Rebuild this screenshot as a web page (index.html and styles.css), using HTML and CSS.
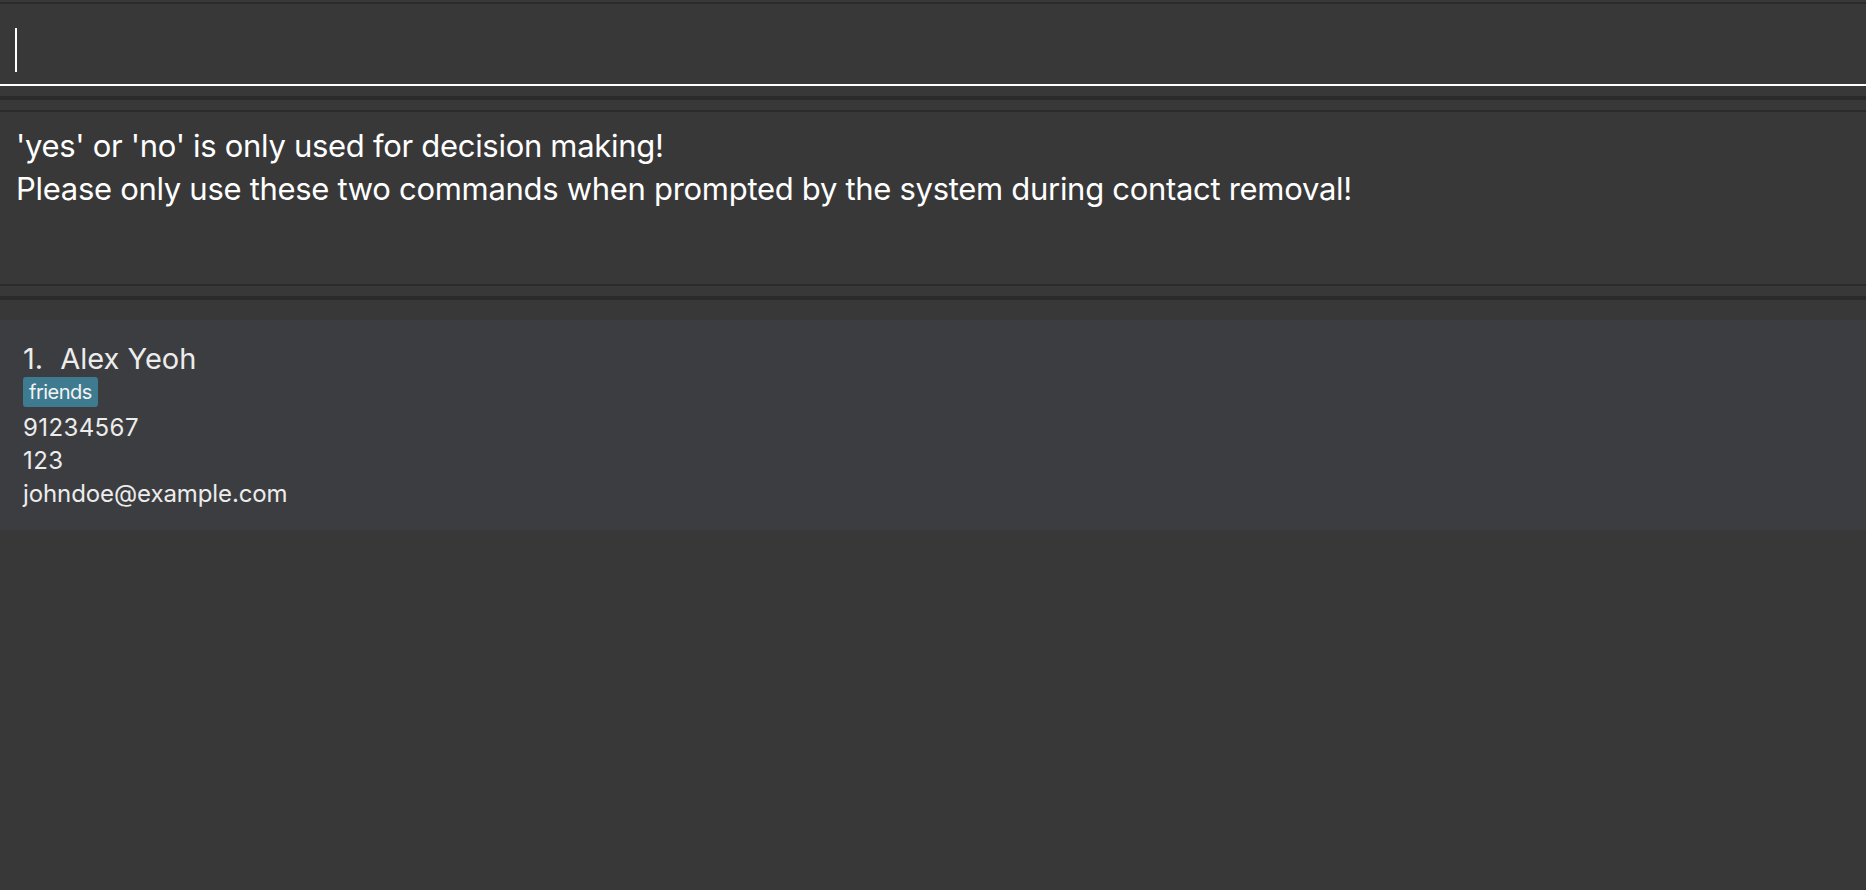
FILE: index.html
```html
<!DOCTYPE html>
<html>
<head>
<meta charset="utf-8">
<link rel="stylesheet" href="styles.css">
</head>
<body>
<div class="app">
  <div class="command-pane">
    <div class="command-box"><span class="caret"></span></div>
  </div>
  <div class="splitter"></div>
  <div class="result-pane">
    <div class="result-box">
      <div class="result-line">'yes' or 'no' is only used for decision making!</div>
      <div class="result-line">Please only use these two commands when prompted by the system during contact removal!</div>
    </div>
  </div>
  <div class="splitter"></div>
  <div class="list-pane">
    <div class="card">
      <div class="card-name"><span class="card-index">1.</span>Alex Yeoh</div>
      <div class="tags"><span class="tag">friends</span></div>
      <div class="detail detail-num">91234567</div>
      <div class="detail detail-num">123</div>
      <div class="detail">johndoe@example.com</div>
    </div>
  </div>
</div>
</body>
</html>
```

FILE: styles.css
```css
html, body {
  margin: 0;
  padding: 0;
  background: #383838;
  height: 100%;
  overflow: hidden;
}

.app {
  font-family: "Inter", "Noto Sans", sans-serif;
  color: #ffffff;
  display: flex;
  flex-direction: column;
}

.command-pane {
  padding: 2px 0 10px;
}

.command-box {
  height: 80px;
  border-top: 2px solid #2b2b2b;
  border-bottom: 2px solid #ffffff;
  box-sizing: content-box;
  padding-left: 15px;
  display: flex;
  align-items: flex-start;
}

.caret {
  display: block;
  width: 2px;
  height: 44px;
  margin-top: 24px;
  background: #ffffff;
}

.splitter {
  height: 4px;
  background: #2b2b2b;
}

.result-pane {
  padding: 10px 0;
}

.result-box {
  border-top: 2px solid #2b2b2b;
  border-bottom: 2px solid #2b2b2b;
  padding: 12px 16px 0;
  box-sizing: content-box;
  height: 160px;
  font-size: 31px;
  line-height: 43px;
  letter-spacing: -0.3px;
  color: #ffffff;
}

.list-pane {
  padding-top: 20px;
}

.card {
  background: #3c3d40;
  padding: 21px 23px 20px;
  color: #ececec;
}

.card-name {
  font-size: 29px;
  line-height: 36px;
}

.card-index {
  margin-right: 17px;
}

.tags {
  display: flex;
  margin-bottom: 4px;
}

.tag {
  background: #3e7b91;
  color: #f4f4f4;
  font-size: 20px;
  letter-spacing: -0.5px;
  line-height: 30px;
  height: 30px;
  padding: 0 6px;
  border-radius: 3px;
}

.detail {
  font-size: 24px;
  line-height: 33px;
  letter-spacing: -0.1px;
}

.detail-num {
  letter-spacing: 0.4px;
}
```
